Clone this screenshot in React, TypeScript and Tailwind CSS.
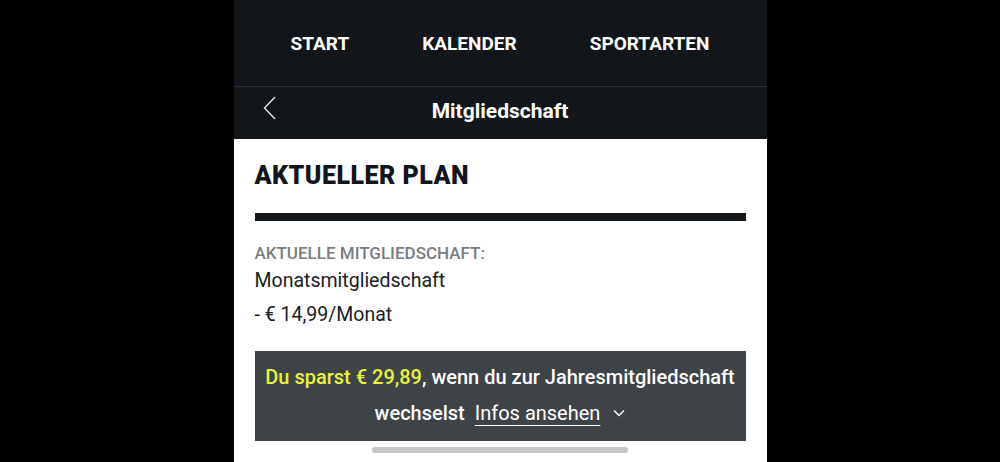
export default function App() {
    const navItems = ['START', 'KALENDER', 'SPORTARTEN'];

    return (
        <div className="relative flex h-[462px] w-full justify-center overflow-hidden bg-black font-['Roboto',sans-serif]">
            <div className="flex w-[533px] flex-col">
                {/* Top navigation */}
                <nav className="flex h-[87px] items-center justify-center gap-[73px] border-b border-[#2a3038] bg-[#12161b] pt-[3px]">
                    {navItems.map((item) => (
                        <span key={item} className="text-[19px] font-bold text-white">
                            {item}
                        </span>
                    ))}
                </nav>

                {/* Sub header */}
                <div className="relative flex h-[52px] items-center justify-center bg-[#12161b] pb-[3px]">
                    <svg
                        className="absolute left-[29px] top-[9px]"
                        width="13"
                        height="24"
                        viewBox="0 0 13 24"
                        fill="none"
                        stroke="#e5e7eb"
                        strokeWidth={1.4}
                    >
                        <polyline points="12,1 1.5,12 12,23" />
                    </svg>
                    <h1 className="text-[21px] font-bold text-white">Mitgliedschaft</h1>
                </div>

                {/* Content */}
                <main className="flex-1 bg-white px-[21px] pt-[22px]">
                    <h2 className="text-[25px] font-black leading-[30px] tracking-[0.5px] text-[#12161b]">
                        AKTUELLER PLAN
                    </h2>
                    <div className="mt-[22px] h-[8px] w-full bg-[#12161b]" />

                    <p className="mt-[20px] text-[17px] font-medium leading-[24px] text-[#7a7d80]">
                        AKTUELLE MITGLIEDSCHAFT:
                    </p>
                    <p className="mt-[2px] text-[19.5px] leading-[28px] text-[#1a1d21]">Monatsmitgliedschaft</p>
                    <p className="mt-[6px] text-[19.5px] leading-[28px] text-[#1a1d21]">- € 14,99/Monat</p>

                    <div className="mt-[22px] bg-[#3e4347] pb-[10px] pt-[8px] text-center text-[20px] font-medium leading-[36px] text-white">
                        <div>
                            <span className="text-[#e8f23c]">Du sparst € 29,89</span>, wenn du zur Jahresmitgliedschaft
                        </div>
                        <div className="flex items-center justify-center">
                            <span>wechselst</span>
                            <span className="ml-[10px] font-normal underline decoration-1 underline-offset-[5px]">
                                Infos ansehen
                            </span>
                            <svg
                                className="ml-[13px]"
                                width="12"
                                height="8"
                                viewBox="0 0 12 8"
                                fill="none"
                                stroke="white"
                                strokeWidth={1.4}
                            >
                                <polyline points="1,1.5 6,6.5 11,1.5" />
                            </svg>
                        </div>
                    </div>
                </main>
            </div>

            {/* Home indicator */}
            <div className="absolute bottom-[9px] left-1/2 h-[6px] w-[256px] -translate-x-1/2 rounded-full bg-[#c6c6c6]" />
        </div>
    );
}
